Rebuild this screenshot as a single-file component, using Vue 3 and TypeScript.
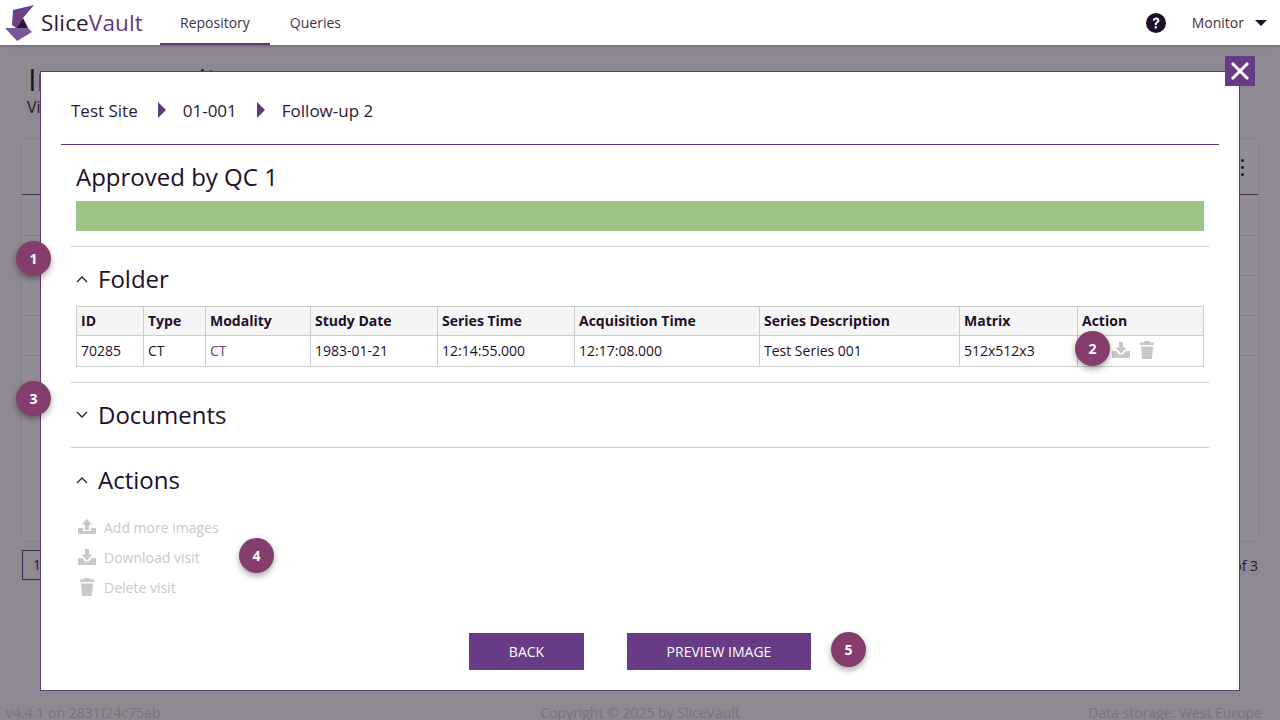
<script setup lang="ts">
const crumbs = ['Test Site', '01-001', 'Follow-up 2']

const columns = [
  { label: 'ID', width: 67 },
  { label: 'Type', width: 62 },
  { label: 'Modality', width: 105 },
  { label: 'Study Date', width: 127 },
  { label: 'Series Time', width: 137 },
  { label: 'Acquisition Time', width: 185 },
  { label: 'Series Description', width: 200 },
  { label: 'Matrix', width: 118 },
  { label: 'Action', width: 126 },
]

const row = ['70285', 'CT', 'CT', '1983-01-21', '12:14:55.000', '12:17:08.000', 'Test Series 001', '512x512x3']

const actions = [
  { label: 'Add more images', icon: 'upload' },
  { label: 'Download visit', icon: 'download' },
  { label: 'Delete visit', icon: 'trash' },
]

const badges = [
  { n: 1, x: 33, y: 259 },
  { n: 3, x: 33, y: 399 },
  { n: 2, x: 1092, y: 349 },
  { n: 4, x: 256, y: 556 },
  { n: 5, x: 848, y: 650 },
]

const uploadPath = 'M9 1 3.500 6.500H7V12h4V6.500h3.500zM0 10v6h18v-6h-5v3H5v-3z'
const downloadPath = 'M7 1v5.500H3.500L9 12.500l5.500-6H11V1zM0 10v7h18v-7h-4.500L11 13.500H7L4.500 10z'
const trashPath = 'M6.500 0h5l.8 1.500H16V4H2V1.500h3.700zM3 5.500h12L14 18H4z'
</script>

<template>
  <div class="page">
    <header class="topbar">
      <div class="brand">
        <svg class="logo" viewBox="0 0 40 45" width="40" height="45">
          <path d="M34 5 13 10 12 25 16 28 23 18Z" fill="#6b4288" />
          <path d="M23 18 16 28 28 28Z" fill="#2a1638" />
          <path d="M5 28 16 28 28 28 32 32 17 41Z" fill="#7b559a" />
        </svg>
        <span class="brand-name">Slice<em>Vault</em></span>
      </div>
      <nav class="tabs">
        <a class="tab active">Repository</a>
        <a class="tab">Queries</a>
      </nav>
      <div class="right">
        <svg class="help" viewBox="0 0 20 20" width="20" height="20">
          <circle cx="10" cy="10" r="10" fill="#1e0f2a" />
          <path d="M6.800 7.600C6.900 5.700 8.200 4.600 10.100 4.600c1.900 0 3.300 1.100 3.300 2.800 0 1.300-.7 2-1.700 2.600-.8.500-1 .8-1 1.500v.4H8.800v-.6c0-1.100.4-1.700 1.300-2.300.8-.5 1.100-.8 1.100-1.400 0-.6-.5-1-1.100-1-.7 0-1.200.4-1.300 1.100zM8.600 13.300h2.200v2.200H8.600z" fill="#fff" />
        </svg>
        <span class="user">Monitor</span>
        <span class="caret"></span>
      </div>
    </header>

    <main class="content">
      <h1 class="page-title">In progress items</h1>
      <p class="page-sub">View items in progress</p>
      <section class="card">
        <div class="card-head"><span class="dots"><i></i><i></i><i></i></span></div>
        <div class="card-row"></div>
        <div class="card-row"></div>
        <div class="card-row"></div>
        <div class="card-row"></div>
      </section>
      <div class="pager">
        <span class="page-box">1</span>
        <span class="page-of">1 of 3</span>
      </div>
    </main>

    <footer class="foot">
      <span>v4.4.1 on 2831f24c75ab</span>
      <span class="foot-mid">Copyright © 2025 by SliceVault</span>
      <span class="foot-end">Data storage: West Europe</span>
    </footer>

    <div class="backdrop">
      <div class="modal">
        <button class="close" aria-label="Close">
          <svg viewBox="0 0 20 20" width="20" height="20">
            <path d="M2 2 18 18M18 2 2 18" stroke="#fff" stroke-width="3" fill="none" />
          </svg>
        </button>

        <div class="crumbs">
          <template v-for="(c, i) in crumbs" :key="c">
            <span v-if="i > 0" class="crumb-sep"></span>
            <span>{{ c }}</span>
          </template>
        </div>

        <div class="status">
          <h2 class="status-title">Approved by QC 1</h2>
          <div class="status-bar"></div>
        </div>

        <section class="panel panel-folder">
          <h3 class="panel-head">
            <svg class="chev" viewBox="0 0 12 8" width="12" height="8"><path d="M1 7 6 2l5 5" /></svg>
            Folder
          </h3>
          <table class="grid">
            <colgroup>
              <col v-for="c in columns" :key="c.label" :style="{ width: c.width + 'px' }" />
            </colgroup>
            <thead>
              <tr><th v-for="c in columns" :key="c.label">{{ c.label }}</th></tr>
            </thead>
            <tbody>
              <tr>
                <td v-for="(v, i) in row" :key="i" :class="{ link: i === 2 }">{{ v }}</td>
                <td>
                  <div class="cell-icons">
                    <svg viewBox="0 0 18 18" width="18" height="18"><path :d="downloadPath" /></svg>
                    <svg viewBox="0 0 18 18" width="18" height="18"><path :d="trashPath" /></svg>
                  </div>
                </td>
              </tr>
            </tbody>
          </table>
        </section>

        <section class="panel">
          <h3 class="panel-head">
            <svg class="chev" viewBox="0 0 12 8" width="12" height="8"><path d="M1 1l5 5 5-5" /></svg>
            Documents
          </h3>
        </section>

        <section class="panel panel-last">
          <h3 class="panel-head">
            <svg class="chev" viewBox="0 0 12 8" width="12" height="8"><path d="M1 7 6 2l5 5" /></svg>
            Actions
          </h3>
          <ul class="action-list">
            <li v-for="a in actions" :key="a.label">
              <svg viewBox="0 0 18 18" width="18" height="18">
                <path :d="a.icon === 'upload' ? uploadPath : a.icon === 'download' ? downloadPath : trashPath" />
              </svg>
              {{ a.label }}
            </li>
          </ul>
        </section>

        <div class="buttons">
          <button class="btn btn-back">BACK</button>
          <button class="btn btn-preview">PREVIEW IMAGE</button>
        </div>
      </div>
    </div>

    <span
      v-for="b in badges"
      :key="b.n"
      class="badge"
      :style="{ left: b.x + 'px', top: b.y + 'px' }"
    >{{ b.n }}</span>
  </div>
</template>

<style>
html, body { margin: 0; background: #fff; overflow: hidden; }
</style>

<style scoped>
.page {
  position: relative;
  width: 1280px;
  height: 720px;
  overflow: hidden;
  display: flex;
  flex-direction: column;
  background: #f6f6f6;
  color: #1e0f2a;
  font-family: "Open Sans", "Noto Sans", sans-serif;
}

.topbar {
  position: relative;
  z-index: 3;
  flex: none;
  height: 45px;
  display: flex;
  align-items: stretch;
  background: #fff;
  box-shadow: 0 1px 3px rgba(0, 0, 0, 0.3);
}

.brand {
  width: 160px;
  box-sizing: border-box;
  display: flex;
  align-items: center;
  gap: 1px;
}

.logo { flex: none; }

.brand-name {
  font-size: 22.500px;
  line-height: 45px;
  letter-spacing: 0.15px;
  color: #2b1a38;
}

.brand-name em {
  font-style: normal;
  color: #5f3b7c;
}

.tabs { display: flex; }

.tab {
  padding: 0 20px;
  font-size: 14px;
  line-height: 45px;
  color: #3d3346;
  box-sizing: border-box;
}

.tab.active { border-bottom: 2px solid #5e3a78; }

.right {
  margin-left: auto;
  padding-right: 13px;
  display: flex;
  align-items: center;
}

.help { margin-right: 26px; }

.user {
  font-size: 14px;
  color: #3d3346;
  margin-right: 11px;
}

.caret {
  width: 0;
  height: 0;
  border-left: 6px solid transparent;
  border-right: 6px solid transparent;
  border-top: 6px solid #1e0f2a;
}

.content {
  flex: 1;
  padding: 16px 22px 0;
  min-height: 0;
}

.page-title {
  margin: 0 0 0 6px;
  font-size: 31px;
  font-weight: 500;
  line-height: 37px;
  white-space: nowrap;
}

.page-sub {
  margin: 0 0 0 5px;
  font-size: 16px;
  line-height: 18px;
}

.card {
  margin-top: 24px;
  height: 400px;
  background: #fff;
  box-shadow: 0 0 2px rgba(0, 0, 0, 0.15);
}

.card-head {
  height: 54px;
  border-bottom: 1px solid #5e3a78;
  display: flex;
  justify-content: flex-end;
  align-items: center;
  padding-right: 14px;
}

.dots {
  display: flex;
  flex-direction: column;
  gap: 4px;
}

.dots i {
  width: 3px;
  height: 3px;
  border-radius: 50%;
  background: #1e0f2a;
}

.card-row {
  height: 40px;
  box-sizing: border-box;
  border-bottom: 1px solid #e4e4e4;
}

.card-head + .card-row { height: 41px; }

.pager {
  display: flex;
  justify-content: space-between;
  align-items: center;
  margin-top: 10px;
}

.page-box {
  width: 30px;
  height: 30px;
  line-height: 28px;
  padding-left: 10px;
  box-sizing: border-box;
  border: 1px solid #5e3a78;
  font-size: 14px;
}

.page-of { font-size: 14px; }

.foot {
  flex: none;
  display: grid;
  grid-template-columns: 1fr auto 1fr;
  padding: 0 6px;
  height: 17px;
  font-size: 14px;
  line-height: 20px;
  color: #ccc;
}

.foot-end {
  text-align: right;
  padding-right: 12px;
}

.backdrop {
  position: absolute;
  inset: 45px 0 0;
  z-index: 2;
  background: rgba(38, 26, 46, 0.5);
}

.modal {
  position: absolute;
  left: 40px;
  top: 26px;
  width: 1200px;
  height: 620px;
  box-sizing: border-box;
  background: #fff;
  border: 1px solid #5e3a78;
  padding: 0 20px 20px;
  display: flex;
  flex-direction: column;
}

.close {
  position: absolute;
  right: -16px;
  top: -16px;
  width: 30px;
  height: 30px;
  padding: 0;
  border: 0;
  background: #673b85;
  display: flex;
  align-items: center;
  justify-content: center;
}

.crumbs {
  height: 73px;
  flex: none;
  box-sizing: border-box;
  border-bottom: 1px solid #5e3a78;
  padding: 4px 0 0 10px;
  display: flex;
  align-items: center;
  font-size: 17px;
  color: #2b1a38;
}

.crumb-sep {
  width: 0;
  height: 0;
  margin: 0 17px 0 20px;
  border-top: 8px solid transparent;
  border-bottom: 8px solid transparent;
  border-left: 8px solid #5e3a78;
}

.status {
  flex: none;
  height: 102px;
  box-sizing: border-box;
  border-bottom: 1px solid #ccc;
  margin: 0 10px;
  padding: 15px 5px;
}

.status-title {
  margin: 0 0 8px;
  font-size: 24px;
  font-weight: 400;
  line-height: 33px;
}

.status-bar {
  height: 30px;
  background: #9fc487;
}

.panel {
  margin: 0 10px;
  padding: 16px 5px;
  border-bottom: 1px solid #ccc;
}

.panel-folder { padding-bottom: 15px; }

.panel-last {
  border-bottom: 0;
  padding-bottom: 0;
}

.panel-head {
  margin: 0;
  display: flex;
  align-items: center;
  gap: 10px;
  font-size: 24px;
  font-weight: 400;
  line-height: 32px;
}

.chev {
  fill: none;
  stroke: #2b1a38;
  stroke-width: 1.300;
}

.grid {
  margin-top: 11px;
  width: 1127px;
  table-layout: fixed;
  border-collapse: collapse;
  font-size: 14px;
}

.grid th,
.grid td {
  border: 1px solid #ccc;
  padding: 0 4px 2px;
  text-align: left;
  white-space: nowrap;
  overflow: hidden;
}

.grid th {
  height: 26px;
  background: #f5f5f5;
  font-weight: 700;
}

.grid td { height: 28px; }

.grid td.link { color: #6b4288; }

.cell-icons {
  display: flex;
  gap: 8px;
  padding-left: 30px;
}

.cell-icons svg { fill: #c8c8c8; }

.action-list {
  margin: 16px 0 0;
  padding: 0;
  list-style: none;
  display: flex;
  flex-direction: column;
}

.action-list li {
  height: 30px;
  display: flex;
  align-items: center;
  gap: 8px;
  padding-left: 2px;
  font-size: 14px;
  color: #c8c8c8;
}

.action-list svg { fill: #c8c8c8; }

.buttons {
  margin-top: auto;
  display: flex;
  justify-content: center;
  gap: 43px;
}

.btn {
  height: 37px;
  border: 0;
  background: #673b85;
  color: #fff;
  font-family: inherit;
  font-size: 14px;
  padding: 0;
}

.btn-back { width: 115px; }

.btn-preview { width: 184px; }

.badge {
  position: absolute;
  z-index: 4;
  width: 35px;
  height: 35px;
  margin: -18px 0 0 -17px;
  border-radius: 50%;
  background: #853d6b;
  color: #fff;
  font-size: 14px;
  font-weight: 700;
  display: flex;
  align-items: center;
  justify-content: center;
  box-shadow: 0 3px 6px rgba(0, 0, 0, 0.35);
}
</style>
